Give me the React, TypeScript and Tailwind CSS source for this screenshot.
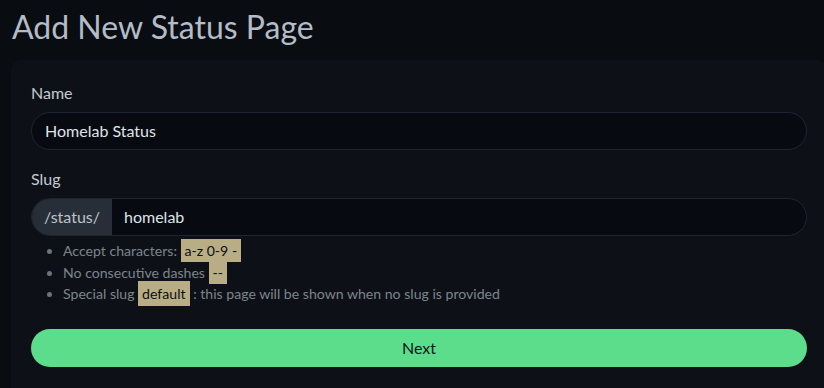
export default function App() {
  return (
    <div
      className="w-[824px] h-[388px] overflow-hidden bg-[#090c10]"
      style={{ fontFamily: 'Lato, "Noto Sans", sans-serif' }}
    >
      <h1 className="pl-3 pt-[7px] text-[32px] leading-[40px] font-normal text-[#b3bcc7]">
        Add New Status Page
      </h1>

      <div className="mt-[13px] ml-[11px] w-[816px] h-[340px] rounded-[10px] bg-[#0d1117] px-5 pt-[21px]">
        <label className="block mb-[7px] text-base leading-6 text-[#c5cad1]">Name</label>
        <div className="h-[38px] rounded-full border border-[#1d2532] bg-[#070a10] flex items-center px-[13px] text-base text-[#dfe3e8]">
          Homelab Status
        </div>

        <label className="block mt-[17px] mb-[7px] text-base leading-6 text-[#c5cad1]">Slug</label>
        <div className="h-[38px] flex rounded-full border border-[#1d2532] bg-[#070a10] overflow-hidden">
          <div className="w-[80px] bg-[#282e38] flex items-center pl-3 text-base text-[#bcc2c9]">/status/</div>
          <div className="flex items-center pl-3 text-base text-[#dfe3e8]">homelab</div>
        </div>

        <ul className="mt-1 pl-8 list-disc text-[14.1px] leading-[21.5px] text-[#7d848d] marker:text-[#6c737c]">
          <li>
            Accept characters:{" "}
            <code className="bg-[#b9ad86] text-[#0b0e12] px-1 py-[3px]" style={{ fontFamily: "inherit" }}>
              a-z 0-9 -
            </code>
          </li>
          <li>
            No consecutive dashes{" "}
            <code className="bg-[#b9ad86] text-[#0b0e12] px-1 py-[3px]" style={{ fontFamily: "inherit" }}>
              --
            </code>
          </li>
          <li>
            Special slug{" "}
            <code className="bg-[#b9ad86] text-[#0b0e12] px-1 py-[4px]" style={{ fontFamily: "inherit" }}>
              default
            </code>{" "}
            : this page will be shown when no slug is provided
          </li>
        </ul>

        <button className="mt-[24px] w-full h-[38px] rounded-full bg-[#5cdd8b] text-base text-[#10151b]">
          Next
        </button>
      </div>
    </div>
  );
}
